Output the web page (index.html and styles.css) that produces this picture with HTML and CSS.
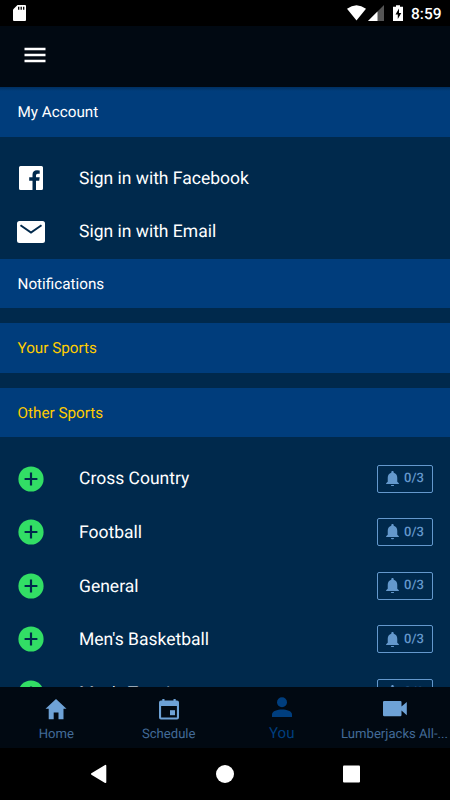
FILE: index.html
```html
<!DOCTYPE html>
<html lang="en">
<head>
<meta charset="utf-8">
<title>You</title>
<link rel="stylesheet" href="styles.css">
</head>
<body>
<svg class="defs" width="0" height="0">
  <symbol id="add" viewBox="0 0 26 26"><circle cx="13" cy="13" r="12.6" fill="#32de65"/><path d="M13 6.6v12.8M6.6 13h12.8" stroke="#00294c" stroke-width="2.2"/></symbol>
  <symbol id="bell" viewBox="4 2.5 16 19.5"><path d="M12 22c1.1 0 2-.9 2-2h-4c0 1.1.9 2 2 2zm6-6v-5c0-3.07-1.63-5.64-4.5-6.32V4c0-.83-.67-1.5-1.5-1.5s-1.5.67-1.5 1.5v.68C7.64 5.36 6 7.92 6 11v5l-2 2v1h16v-1l-2-2z" fill="#6498cc"/></symbol>
</svg>
<div class="screen">
  <div class="status">
    <svg class="sd" width="13" height="16" viewBox="0 0 13 16"><path d="M4.500 0H12q1 0 1 1v14q0 1-1 1H1q-1 0-1-1V4.500z" fill="#fff"/><path d="M5.700 1.800v3M8.200 1.800v3M10.700 1.800v3" stroke="#000" stroke-width="1.300"/></svg>
    <svg width="64" height="18" viewBox="347 4 64 18" class="signals"><path d="M347 8.700Q356.500 1.700 366 8.700L356.500 20.500z" fill="#fff"/><path d="M368 21L384 5v16z" fill="#555"/><path d="M368 21l9.500-9.500V21z" fill="#fff"/><path d="M396 5.200h4v1.500h3V21h-10V6.700h3z" fill="#fff"/><path d="M399 8.500l-3.500 6h2.300v4.500l3.500-6h-2.300z" fill="#000"/></svg>
    <span class="clock">8:59</span>
  </div>
  <header class="appbar">
    <svg width="22" height="16" viewBox="0 0 22 16"><path d="M0.500 2h21M0.500 8h21M0.500 14h21" stroke="#fff" stroke-width="2.400"/></svg>
  </header>
  <main class="content">
    <h2 class="head">My Account</h2>
    <div class="list">
      <div class="row"><span class="lead"><svg width="24" height="24" viewBox="0 0 24 24"><path d="M1.500 0h21Q24 0 24 1.500v21q0 1.500-1.500 1.500H17v-9.200h3.200l.5-3.500H17V9.200q0-1.500 1.700-1.500h2V4.400q-1-.2-2.700-.2-4.500 0-4.500 4.500v2.600h-3.300v3.500h3.300V24h-12Q0 24 0 22.500v-21Q0 0 1.500 0z" fill="#fff"/></svg></span><span class="label">Sign in with Facebook</span></div>
      <div class="row"><span class="lead"><svg width="28" height="22" viewBox="0 0 28 22"><rect width="28" height="22" rx="2.500" fill="#fff"/><path d="M3.500 4.300L14 11.500l10.500-7.200" fill="none" stroke="#00294c" stroke-width="2"/></svg></span><span class="label">Sign in with Email</span></div>
    </div>
    <h2 class="head">Notifications</h2>
    <h2 class="head gold gap">Your Sports</h2>
    <h2 class="head gold gap">Other Sports</h2>
    <div class="list">
      <div class="row"><span class="lead"><svg width="26" height="26"><use href="#add"/></svg></span><span class="label">Cross Country</span><span class="count"><svg width="13" height="15.500"><use href="#bell"/></svg>0/3</span></div>
      <div class="row"><span class="lead"><svg width="26" height="26"><use href="#add"/></svg></span><span class="label">Football</span><span class="count"><svg width="13" height="15.500"><use href="#bell"/></svg>0/3</span></div>
      <div class="row"><span class="lead"><svg width="26" height="26"><use href="#add"/></svg></span><span class="label">General</span><span class="count"><svg width="13" height="15.500"><use href="#bell"/></svg>0/3</span></div>
      <div class="row"><span class="lead"><svg width="26" height="26"><use href="#add"/></svg></span><span class="label">Men's Basketball</span><span class="count"><svg width="13" height="15.500"><use href="#bell"/></svg>0/3</span></div>
      <div class="row"><span class="lead"><svg width="26" height="26"><use href="#add"/></svg></span><span class="label">Men's Tennis</span><span class="count"><svg width="13" height="15.500"><use href="#bell"/></svg>0/3</span></div>
    </div>
  </main>
  <nav class="tabs">
    <div class="tab"><svg width="22" height="21" viewBox="0 0 22 21"><path d="M11 0L21.500 9.700H18.500v10.600h-5V13.500H8.700v6.800h-5V9.700H.5z" fill="#6ea2d6"/></svg><span>Home</span></div>
    <div class="tab"><svg width="22" height="21" viewBox="0 0 22 21"><path d="M4.300 0h2.200v1.400h9V0h2.200v1.400H19q2 0 2 2v15q0 2-2 2H3q-2 0-2-2v-15q0-2 2-2h1.300zM3.100 7v11.500h15.800V7z" fill="#6ea2d6" fill-rule="evenodd"/><path d="M12 11.200h5v5h-5z" fill="#6ea2d6"/></svg><span>Schedule</span></div>
    <div class="tab active"><svg width="22" height="21" viewBox="0 0 22 21"><circle cx="11" cy="5.300" r="5" fill="#003e7e"/><path d="M1 20v-2.700C1 14 6.500 12.500 11 12.500s10 1.500 10 4.800V20z" fill="#003e7e"/></svg><span>You</span></div>
    <div class="tab"><svg width="24" height="21" viewBox="0 0 24 21"><path d="M1.300 1.900h16q1.200 0 1.200 1.200v4.500L23.800 3.100v13.100L18.500 11.400v4.700q0 1.200-1.200 1.200h-16Q0 17.300 0 16.100v-13Q0 1.900 1.300 1.900z" fill="#6ea2d6"/></svg><span>Lumberjacks All-...</span></div>
  </nav>
  <div class="system">
    <svg width="270" height="20" viewBox="90 764 270 20" overflow="visible"><path d="M105.500 765.700v16.600L91.800 774z" fill="#fff" stroke="#fff" stroke-width="1.600" stroke-linejoin="round"/><circle cx="225" cy="774" r="9" fill="#fff"/><rect x="343" y="765.500" width="17" height="17" rx="1" fill="#fff"/></svg>
  </div>
</div>
</body>
</html>
```
FILE: styles.css
```css
* { box-sizing: border-box; }
body { margin: 0; font-family: Roboto, "Liberation Sans", sans-serif; background: #000; text-rendering: geometricPrecision; }
svg { display: block; flex: none; }
.defs { position: absolute; }
.screen { width: 450px; height: 800px; display: flex; flex-direction: column; overflow: hidden; }
.status { flex: none; height: 26px; display: flex; align-items: center; padding: 0 9px 0 13px; color: #fff; }
.signals { margin-left: auto; }
.clock { font-size: 15.500px; font-weight: 500; line-height: 26px; width: 30px; white-space: nowrap; padding-top: 2px; }
.appbar { flex: none; height: 61px; background: #010912; display: flex; align-items: center; padding: 0 0 3px 24px; }
.content { flex: none; height: 600px; background: #00294c; overflow: hidden; }
.head { margin: 0; height: 49.300px; padding: 1px 0 0 17.500px; line-height: 49.300px; background: #003d7c; color: #fff; font-size: 15.250px; font-weight: 400; }
.content > .head:first-child { height: 49.800px; background: linear-gradient(#002f60, #003d7c 4px); }
.content > .gold { color: #ffcc00; }
.content > .gap { margin-top: 15.400px; }
.list { padding-top: 14.400px; padding-bottom: 0.300px; }
.row { height: 53.600px; display: flex; align-items: center; padding-right: 17px; }
.lead { width: 61px; display: flex; justify-content: center; }
.label { margin-left: 18px; flex: 1; color: #fff; font-size: 17.500px; line-height: 20px; padding-top: 1.800px; }
.count { width: 56px; height: 28px; border: 1px solid #6498cc; border-radius: 2px; display: flex; align-items: center; gap: 5px; padding-left: 8px; color: #6498cc; font-size: 13px; font-weight: 500; }
.tabs { flex: none; height: 61px; background: #010912; display: grid; grid-template-columns: repeat(4, 112.500px); padding-top: 12px; }
.tab { display: flex; flex-direction: column; align-items: center; gap: 7px; color: #426b98; font-size: 13.100px; line-height: 15px; white-space: nowrap; }
.tab:last-child { padding-left: 1.500px; }
.active { margin-top: -2px; gap: 8px; color: #003e7e; font-size: 15px; padding-left: 1px; }
.system { flex: 1; display: flex; justify-content: center; align-items: center; }
```
